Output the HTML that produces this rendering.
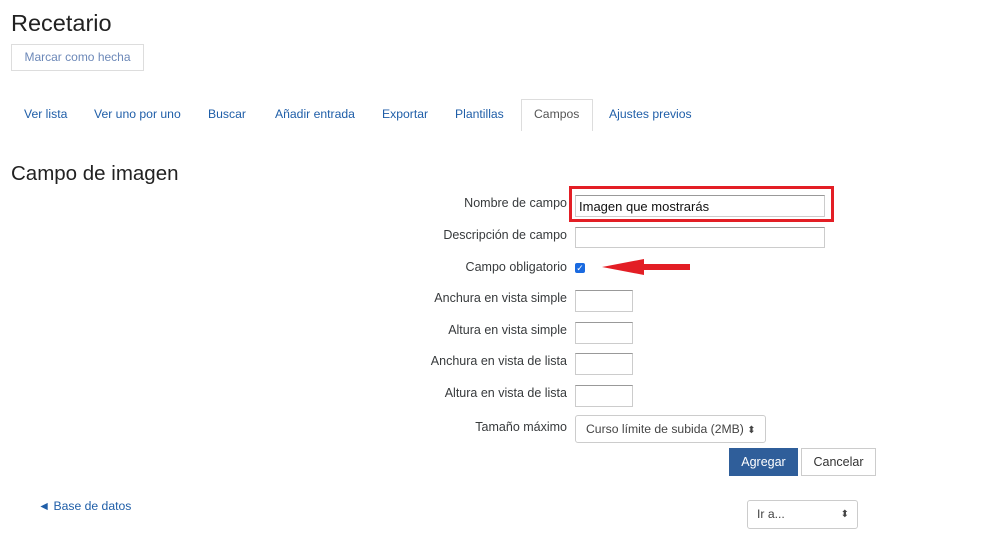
<!DOCTYPE html>
<html><head><meta charset="utf-8"><style>
body{margin:0;width:993px;height:543px;background:#fff;font-family:"Liberation Sans",sans-serif;position:relative;overflow:hidden;color:#373a3c}
.a{position:absolute;white-space:nowrap}
.tab{position:absolute;top:107px;font-size:12.2px;color:#1f5ea8}
.lbl{position:absolute;right:426px;font-size:12.5px;color:#373a3c}
.in{position:absolute;left:575px;border:1px solid #ccc;border-top-color:#999;box-sizing:border-box;background:#fff}
</style></head><body>
<div class="a" style="left:11px;top:10px;font-size:23.5px;color:#222">Recetario</div>
<div class="a" style="left:11px;top:44px;width:133px;height:27px;border:1px solid #ddd;box-sizing:border-box;font-size:12px;color:#6c88b8;line-height:25px;text-align:center">Marcar como hecha</div>
<span class="tab" style="left:24px">Ver lista</span>
<span class="tab" style="left:94px">Ver uno por uno</span>
<span class="tab" style="left:208px">Buscar</span>
<span class="tab" style="left:275px">Añadir entrada</span>
<span class="tab" style="left:382px">Exportar</span>
<span class="tab" style="left:455px">Plantillas</span>
<div class="a" style="left:521px;top:99px;width:72px;height:32px;border:1px solid #ddd;border-bottom:none;box-sizing:border-box;background:#fff"></div>
<span class="tab" style="left:534px;color:#555">Campos</span>
<span class="tab" style="left:609px">Ajustes previos</span>
<div class="a" style="left:11px;top:162px;font-size:20.5px;color:#222">Campo de imagen</div>

<span class="lbl" style="top:196px">Nombre de campo</span>
<span class="lbl" style="top:228px">Descripción de campo</span>
<span class="lbl" style="top:260px">Campo obligatorio</span>
<span class="lbl" style="top:291px">Anchura en vista simple</span>
<span class="lbl" style="top:323px">Altura en vista simple</span>
<span class="lbl" style="top:354px">Anchura en vista de lista</span>
<span class="lbl" style="top:386px">Altura en vista de lista</span>
<span class="lbl" style="top:420px">Tamaño máximo</span>

<div class="a" style="left:569px;top:186px;width:265px;height:36px;border:3px solid #e31e25;box-sizing:border-box"></div>
<div class="in" style="top:195px;width:250px;height:22px;font-size:13px;color:#111;padding:3px 0 0 3px">Imagen que mostrarás</div>
<div class="in" style="top:227px;width:250px;height:21px"></div>
<div class="a" style="left:575px;top:263px;width:10px;height:10px;background:#1a6ae0;border-radius:2px;color:#fff;font-size:9px;line-height:10px;text-align:center">✓</div>
<svg class="a" style="left:600px;top:258px" width="92" height="18"><polygon points="2,9 44,1 44,6 90,6 90,12 44,12 44,17" fill="#e31e25"/></svg>
<div class="in" style="top:290px;width:58px;height:22px"></div>
<div class="in" style="top:322px;width:58px;height:22px"></div>
<div class="in" style="top:353px;width:58px;height:22px"></div>
<div class="in" style="top:385px;width:58px;height:22px"></div>
<div class="a" style="left:575px;top:415px;width:191px;height:28px;border:1px solid #ccc;border-radius:3px;box-sizing:border-box;font-size:12.2px;line-height:26px;padding-left:10px;color:#444">Curso límite de subida (2MB) <span style="font-size:10px">⬍</span></div>
<div class="a" style="left:729px;top:448px;width:69px;height:28px;background:#2f5e9a;color:#fff;font-size:12.5px;line-height:28px;text-align:center">Agregar</div>
<div class="a" style="left:801px;top:448px;width:75px;height:28px;border:1px solid #ccc;box-sizing:border-box;color:#333;font-size:12.5px;line-height:26px;text-align:center">Cancelar</div>
<div class="a" style="left:38px;top:499px;font-size:12.2px;color:#1f5ea8">◄ Base de datos</div>
<div class="a" style="left:747px;top:500px;width:111px;height:29px;border:1px solid #ccc;border-radius:3px;box-sizing:border-box;font-size:12.2px;line-height:27px;padding-left:9px;color:#444">Ir a...<span style="position:absolute;right:8px;font-size:10px">⬍</span></div>
</body></html>
